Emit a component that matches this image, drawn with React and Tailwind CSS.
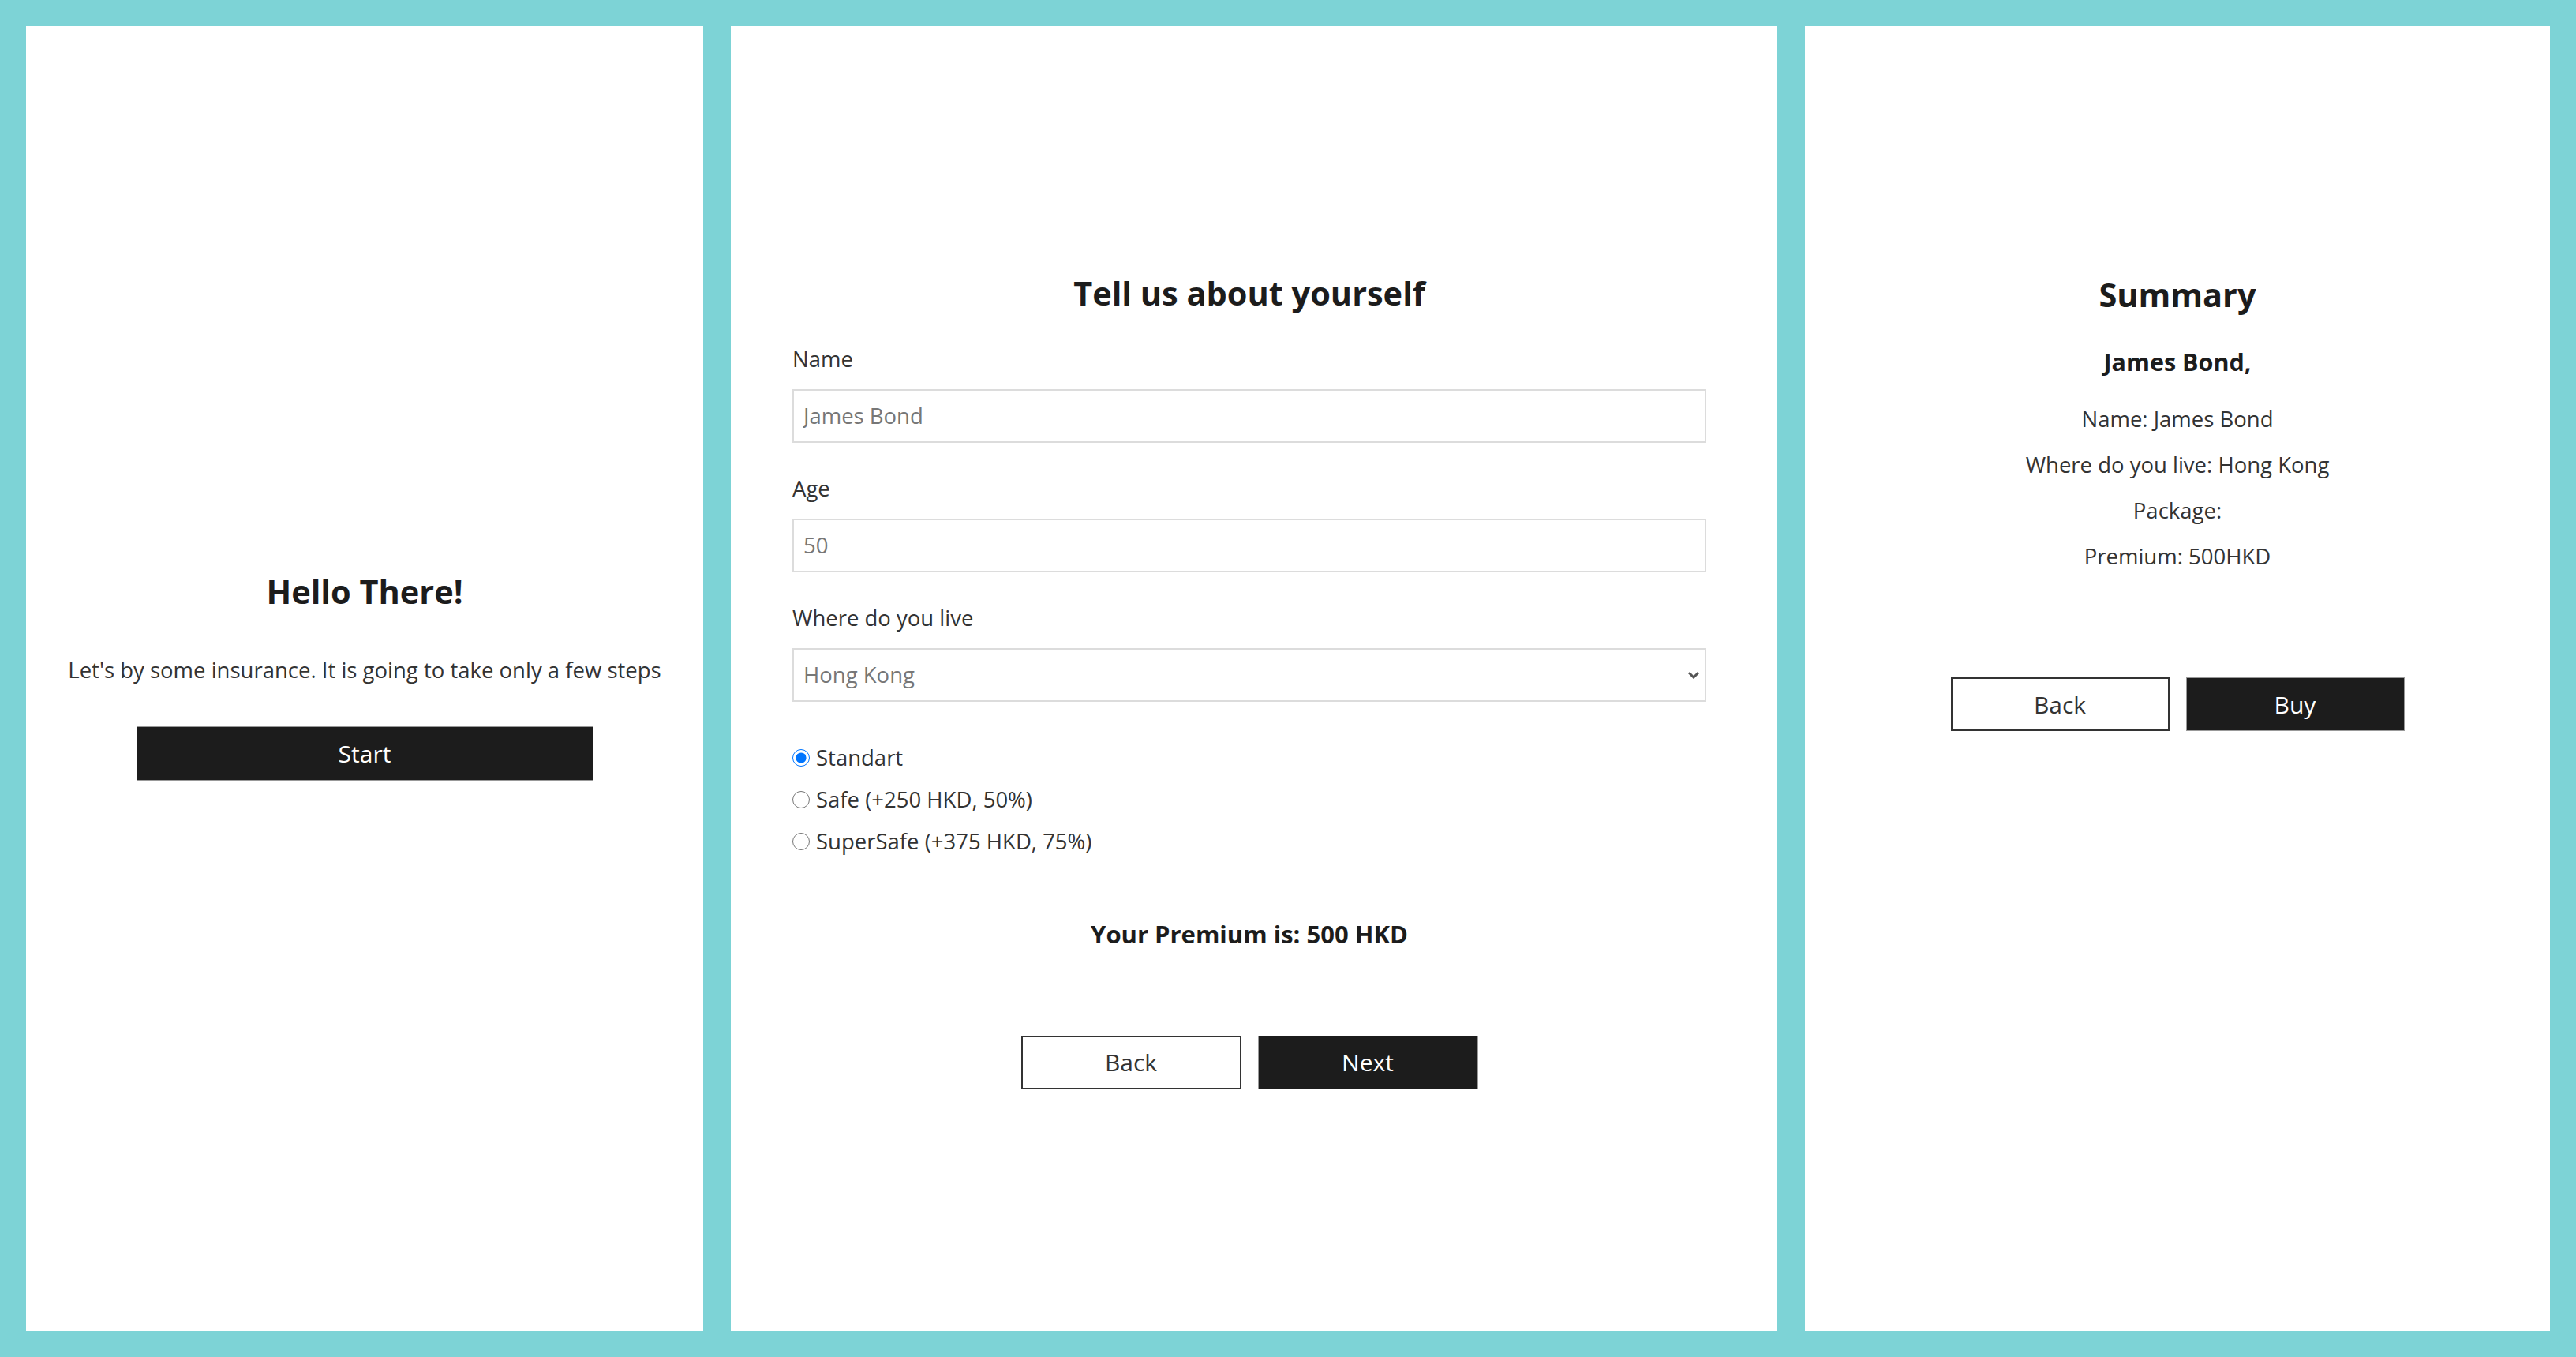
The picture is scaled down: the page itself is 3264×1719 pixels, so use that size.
import { useState } from "react";

const font = { fontFamily: "'Open Sans', 'Noto Sans', sans-serif" };

function Field({ label, children }) {
  return (
    <div className="flex flex-col">
      <label className="text-[27.5px] leading-[36px] text-[#333]">{label}</label>
      <div className="mt-[20px]">{children}</div>
    </div>
  );
}

export default function App() {
  const [pkg, setPkg] = useState("standart");

  const options = [
    { id: "standart", label: "Standart" },
    { id: "safe", label: "Safe (+250 HKD, 50%)" },
    { id: "supersafe", label: "SuperSafe (+375 HKD, 75%)" },
  ];

  return (
    <div
      className="w-full h-screen bg-[#7dd3d6] p-[33px] flex gap-[35px] text-[#1c1c1c]"
      style={font}
    >
      {/* Step 1 */}
      <div className="w-[858px] bg-white flex flex-col items-center justify-center pb-[8px]">
        <h2 className="text-[41.5px] leading-[54px] font-bold">Hello There!</h2>
        <p className="mt-[55px] text-[27.5px] leading-[36px] text-[#333]">
          Let's by some insurance. It is going to take only a few steps
        </p>
        <button className="mt-[53px] w-[579px] h-[69px] bg-[#1c1c1c] border border-[#999] text-white text-[30px]">
          Start
        </button>
      </div>

      {/* Step 2 */}
      <div className="flex-1 bg-white flex flex-col justify-center pl-[78px] pr-[90px] pt-[4px]">
        <h2 className="text-[41.5px] leading-[54px] font-bold text-center">
          Tell us about yourself
        </h2>

        <div className="mt-[39px] flex flex-col gap-[40px]">
          <Field label="Name">
            <input
              type="text"
              placeholder="James Bond"
              className="w-full h-[68px] border-2 border-[#dcdcdc] px-[12px] text-[27.5px] outline-none placeholder:text-[#777]"
            />
          </Field>
          <Field label="Age">
            <input
              type="text"
              placeholder="50"
              className="w-full h-[68px] border-2 border-[#dcdcdc] px-[12px] text-[27.5px] outline-none placeholder:text-[#777]"
            />
          </Field>
          <Field label="Where do you live">
            <div className="relative">
              <select className="w-full h-[68px] border-2 border-[#dcdcdc] px-[12px] text-[27.5px] text-[#777] bg-white outline-none appearance-none">
                <option>Hong Kong</option>
                <option>Singapore</option>
                <option>Taiwan</option>
              </select>
              <svg
                className="absolute right-[8px] top-1/2 -translate-y-1/2 pointer-events-none"
                width="16"
                height="10"
                viewBox="0 0 16 10"
                fill="none"
              >
                <path d="M2 2l6 6 6-6" stroke="#555" strokeWidth="3" />
              </svg>
            </div>
          </Field>
        </div>

        <div className="mt-[45px] flex flex-col">
          {options.map((o) => (
            <label
              key={o.id}
              className="h-[53px] flex items-center gap-[8px] text-[27.5px] text-[#333]"
            >
              <input
                type="radio"
                name="pkg"
                checked={pkg === o.id}
                onChange={() => setPkg(o.id)}
                className="w-[22px] h-[22px] m-0 accent-[#0075ff]"
              />
              {o.label}
            </label>
          ))}
        </div>

        <p className="mt-[71px] text-[31px] leading-[38px] font-bold text-center">
          Your Premium is: 500 HKD
        </p>

        <div className="mt-[110px] flex justify-center gap-[21px]">
          <button className="w-[279px] h-[68px] border-2 border-[#333] bg-white text-[30px] text-[#333]">
            Back
          </button>
          <button className="w-[279px] h-[68px] bg-[#1c1c1c] border border-[#999] text-white text-[30px]">
            Next
          </button>
        </div>
      </div>

      {/* Step 3 */}
      <div className="w-[944px] bg-white flex flex-col items-center pt-[313px]">
        <h2 className="text-[41.5px] leading-[54px] font-bold">Summary</h2>
        <h3 className="mt-[38px] text-[30.5px] leading-[41px] font-bold">James Bond,</h3>
        <div className="mt-[23px] flex flex-col items-center text-[27.5px] leading-[58px] text-[#333]">
          <p>Name: James Bond</p>
          <p>Where do you live: Hong Kong</p>
          <p>Package:</p>
          <p>Premium: 500HKD</p>
        </div>
        <div className="mt-[124px] flex gap-[21px]">
          <button className="w-[277px] h-[68px] border-2 border-[#333] bg-white text-[30px] text-[#333]">
            Back
          </button>
          <button className="w-[277px] h-[68px] bg-[#1c1c1c] border border-[#999] text-white text-[30px]">
            Buy
          </button>
        </div>
      </div>
    </div>
  );
}
